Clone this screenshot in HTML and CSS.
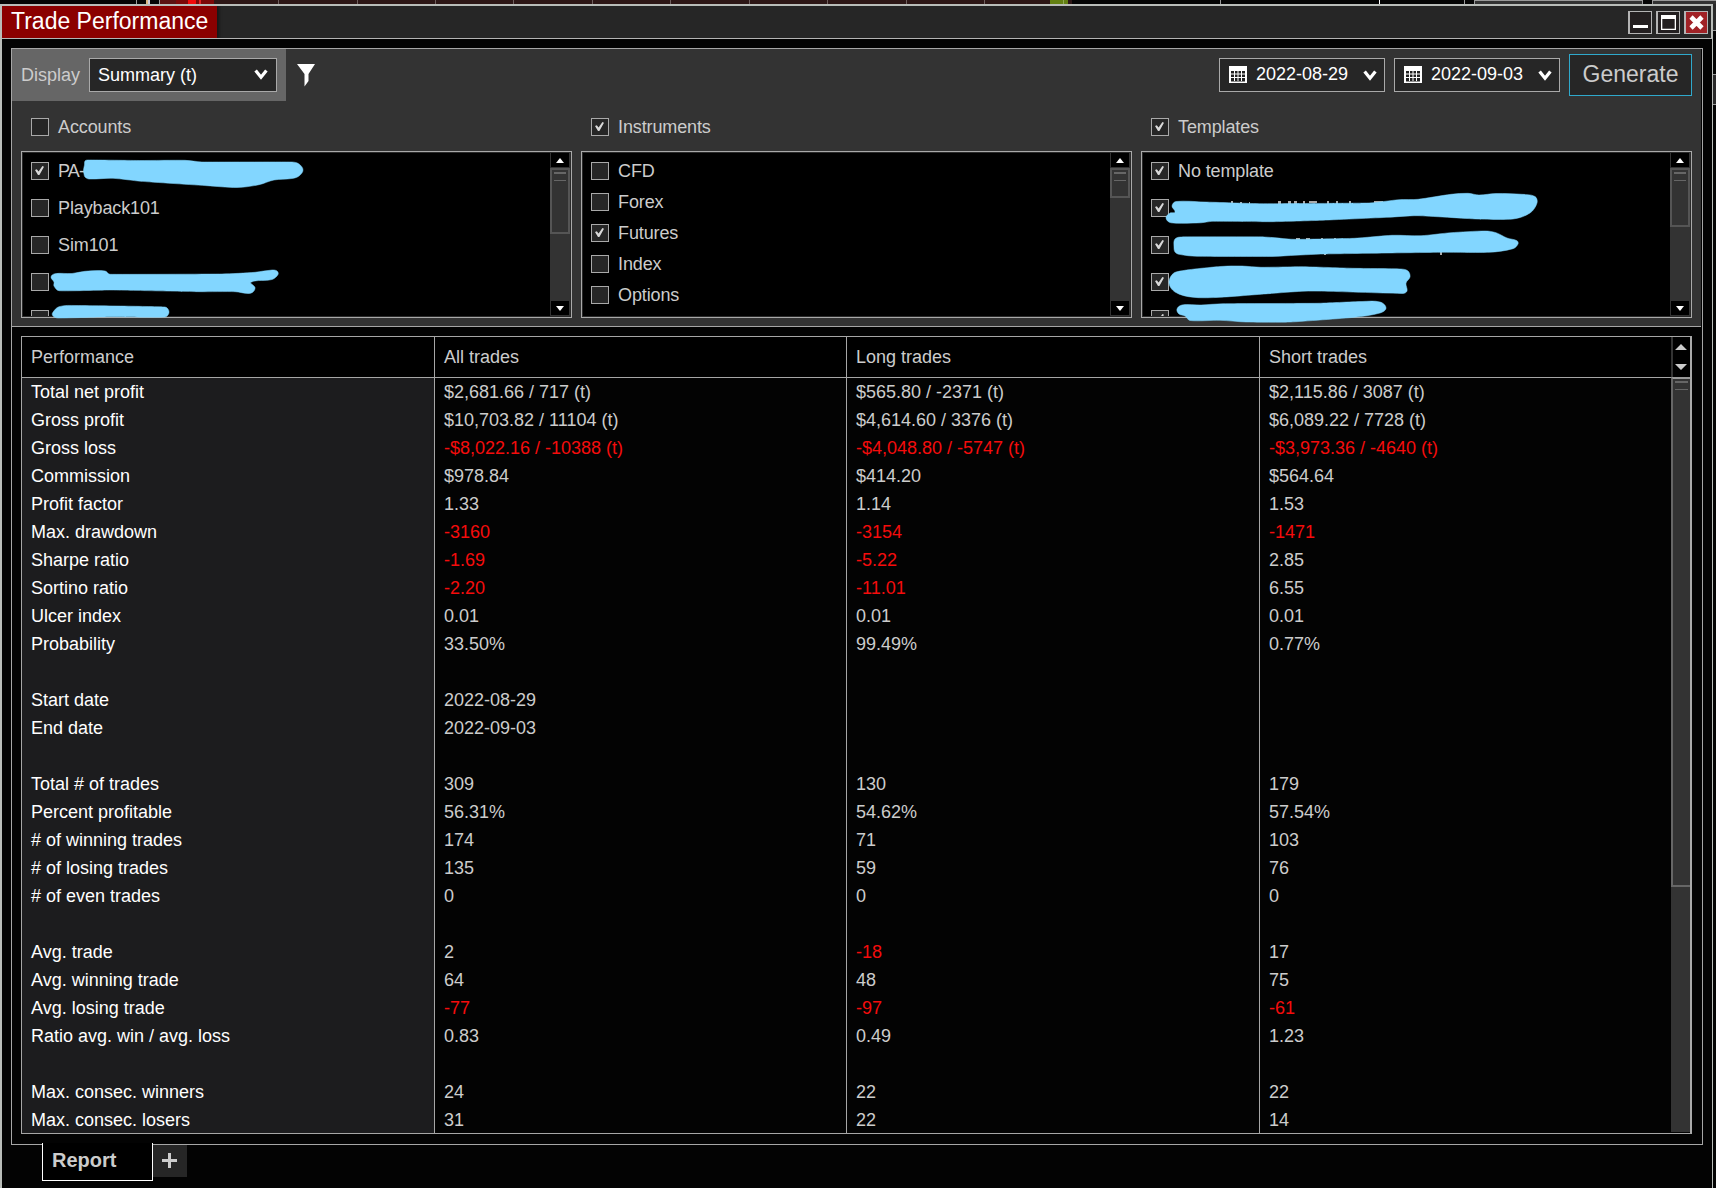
FILE: index.html
```html
<!DOCTYPE html>
<html lang="en">
<head>
<meta charset="utf-8">
<title>Trade Performance</title>
<link rel="stylesheet" href="styles.css">
</head>
<body>
<svg width="0" height="0" class="defs">
  <symbol id="chevron" viewBox="0 0 14 12"><path d="M1.6 2.4 7 9.2 12.4 2.4" fill="none" stroke="#fff" stroke-width="3.2"/></symbol>
  <symbol id="calendar" viewBox="0 0 18 18"><path fill="#fff" d="M0 0h18v17H0z"/><path fill="#222" d="M2 5h14v10.500H2z"/><path d="M5.500 5v10M9 5v10M12.500 5v10M2 8h14M2 11.500h14" stroke="#fff" stroke-width="1"/></symbol>
</svg>
<div class="backdrop">
  <svg width="1716" height="4" shape-rendering="crispEdges">
    <rect width="1716" height="4" fill="#050505"/>
    <path fill="#999" d="M136 0h1v4h-1zM159 0h1v4h-1zM1220 0h1v4h-1zM1464 0h1v4h-1z"/>
    <path fill="#fff" d="M1379 0h1v4h-1z"/>
    <path fill="#d9b582" d="M146 0h2v4h-2z"/><path fill="#ccd" d="M148 0h2v4h-2z"/>
    <rect x="160" width="30" height="4" fill="#5c1212"/><rect x="190" width="860" height="4" fill="#2d1716"/>
    <rect x="176" width="38" height="4" fill="#7b0808"/><rect x="188" width="8" height="4" fill="#f00a0a"/><rect x="199" width="2" height="4" fill="#d22"/>
    <path fill="#6f5f5e" d="M278 0h1v4h-1zM357 0h1v4h-1zM435 0h1v4h-1zM513 0h1v4h-1zM592 0h1v4h-1zM670 0h1v4h-1zM749 0h1v4h-1zM827 0h1v4h-1zM906 0h1v4h-1zM984 0h1v4h-1z"/>
    <rect x="1050" width="18" height="4" fill="#638012"/><rect x="1063" width="1" height="4" fill="#8faa50"/><rect x="1068" width="4" height="4" fill="#2d1716"/>
    <path fill="#999" d="M1474 0h169v4h-169zM1652 0h64v4h-64z"/><path fill="#333" d="M1475 1h167v3h-167zM1653 1h63v3h-63z"/>
  </svg>
</div>
<div class="desk">
<main class="window">
  <header class="titlebar">
    <h1 class="title">Trade Performance</h1>
    <div class="winbtns">
      <span class="winbtn"><svg width="21" height="21"><path fill="#fff" d="M3 13h15v3H3z"/></svg></span>
      <span class="winbtn"><svg width="21" height="21"><path fill="#fff" fill-rule="evenodd" d="M3 3h15v15H3zM4.300 7v9.700h12.400V7z"/></svg></span>
      <span class="winbtn close"><svg width="21" height="21"><path d="M5 5 16 16M16 5 5 16" stroke="#fff" stroke-width="4.600"/></svg></span>
    </div>
  </header>

  <section class="panel">
    <div class="filters">
      <div class="toolbar">
        <div class="display"><span class="display-label">Display</span>
          <div class="combo display-combo"><span>Summary (t)</span><svg width="14" height="12"><use href="#chevron"/></svg></div>
        </div>
        <svg class="funnel" width="18" height="23"><path fill="#fff" d="M0 0h18l-6.500 10v7l-4 5.500V10z"/></svg>
        <div class="actions">
          <div class="combo date"><svg width="18" height="18"><use href="#calendar"/></svg><span>2022-08-29</span><svg class="chev" width="14" height="12"><use href="#chevron"/></svg></div>
          <div class="combo date"><svg width="18" height="18"><use href="#calendar"/></svg><span>2022-09-03</span><svg class="chev" width="14" height="12"><use href="#chevron"/></svg></div>
          <button class="generate">Generate</button>
        </div>
      </div>

      <div class="groups">
        <div class="group">
          <div class="item head"><i class="box"></i>Accounts</div>
          <div class="list wide">
            <div class="items">
              <div class="item tight"><i class="box on"></i>PA-</div>
              <div class="item"><i class="box"></i>Playback101</div>
              <div class="item"><i class="box"></i>Sim101</div>
              <div class="item"><i class="box"></i></div>
              <div class="item"><i class="box"></i></div>
            </div>
            <div class="scroll"><b class="up"></b><span class="thumb t66"></span><b class="down"></b></div>
          </div>
        </div>
        <div class="group">
          <div class="item head"><i class="box on"></i>Instruments</div>
          <div class="list">
            <div class="items">
              <div class="item"><i class="box"></i>CFD</div>
              <div class="item"><i class="box"></i>Forex</div>
              <div class="item"><i class="box on"></i>Futures</div>
              <div class="item"><i class="box"></i>Index</div>
              <div class="item"><i class="box"></i>Options</div>
            </div>
            <div class="scroll"><b class="up"></b><span class="thumb t30"></span><b class="down"></b></div>
          </div>
        </div>
        <div class="group">
          <div class="item head"><i class="box on"></i>Templates</div>
          <div class="list wide">
            <div class="items">
              <div class="item"><i class="box on"></i>No template</div>
              <div class="item"><i class="box on"></i></div>
              <div class="item"><i class="box on"></i></div>
              <div class="item"><i class="box on"></i></div>
              <div class="item"><i class="box on"></i></div>
            </div>
            <div class="scroll"><b class="up"></b><span class="thumb t59"></span><b class="down"></b></div>
          </div>
        </div>
      </div>

      <svg class="redactions" width="1688" height="280" viewBox="12 49 1688 280">
        <path class="hint" d="M1231 201h2v3h-2zM1240 202h2v3h-2zM1249 202h1v3h-1zM1231 201h2v3h-2zM1278 201h3v3h-3zM1288 201h3v3h-3zM1294 201h3v3h-3zM1303 201h2v3h-2zM1309 201h8v2h-8zM1327 201h2v3h-2zM1336 201h2v3h-2zM1349 201h2v3h-2zM1374 201h9v2h-9zM1296 238h4v2h-4zM1306 238h4v2h-4zM1321 238h2v2h-2zM1334 238h2v2h-2zM1360 238h9v2h-9zM1440 251h2v4h-2zM1324 254h2v1h-2z"/>
        <g class="strokes">
          <path data-points="85,161 88,160 141,160.500 185,160.300 202,162 292,162 299,164 303,170 299,176 292,178.500 274,180 259,184.700 237,187.500 207,185.700 141,181.300 113,178.300 89,179 85,177 84,174 83.500,170 84.500,165"/>
          <path data-points="51,277 55,273.700 72,273.500 85,271.300 105,271 110,274.300 222,274 255,272.300 272,270 277,271 278,274.500 272,279.500 251,282.200 255,287.500 253,292 248,293.500 235,291.700 200,291.700 111,290 59,290.700 54,286 54,282"/>
          <path data-points="52.5,313 59,306.700 76,305.500 165,307 169,312 165,317 111,316.700 58,318 53,316"/>
          <path data-points="1172,206 1176,201.500 1205,202 1261,203.700 1369,203 1399,199.700 1418,199.300 1451,194.300 1468,193.300 1479,195 1496,193.500 1522,194.300 1535,196.500 1537,203 1530,213 1513,219 1477,219 1418,215.700 1388,217.300 1321,220.300 1272,221.700 1212,221.300 1201,222.800 1171,222.800 1166,218 1170,213 1175,212"/>
          <path data-points="1174,247 1175,239 1182,237 1264,237 1294,239.300 1354,238.300 1392,235.300 1421,235.700 1451,232.700 1485,231 1496,232.700 1507,238 1517,240.700 1518,244 1513,248.700 1489,252.300 1440,252.300 1324,254 1287,255.700 1272,256.500 1197,256.300 1179,254.300 1175,252"/>
          <path data-points="1169,282 1176,272 1220,266.500 1242,266 1261,267.300 1302,266.700 1354,268.300 1401,269 1408,271 1410,277 1406,283 1407,291 1403,293.500 1328,291.300 1302,291.300 1268,293.700 1220,297.300 1193,297.300 1175,292"/>
          <path data-points="1177,309 1182,305 1201,305 1223,303.700 1317,303.300 1362,301.500 1380,302 1386,308 1380,313 1354,317.300 1291,322 1246,322 1220,320.300 1190,320.500 1185,316 1179,314"/>
        </g>
      </svg>
    </div>

    <div class="report">
      <div class="tablebox">
        <table class="grid">
          <colgroup><col class="c1"><col class="c2"><col class="c3"><col class="c4"></colgroup>
          <thead><tr><th>Performance</th><th>All trades</th><th>Long trades</th><th>Short trades</th></tr></thead>
          <tbody>
            <tr><td>Total net profit</td><td>$2,681.66 / 717 (t)</td><td>$565.80 / -2371 (t)</td><td>$2,115.86 / 3087 (t)</td></tr>
            <tr><td>Gross profit</td><td>$10,703.82 / 11104 (t)</td><td>$4,614.60 / 3376 (t)</td><td>$6,089.22 / 7728 (t)</td></tr>
            <tr><td>Gross loss</td><td class="neg">-$8,022.16 / -10388 (t)</td><td class="neg">-$4,048.80 / -5747 (t)</td><td class="neg">-$3,973.36 / -4640 (t)</td></tr>
            <tr><td>Commission</td><td>$978.84</td><td>$414.20</td><td>$564.64</td></tr>
            <tr><td>Profit factor</td><td>1.33</td><td>1.14</td><td>1.53</td></tr>
            <tr><td>Max. drawdown</td><td class="neg">-3160</td><td class="neg">-3154</td><td class="neg">-1471</td></tr>
            <tr><td>Sharpe ratio</td><td class="neg">-1.69</td><td class="neg">-5.22</td><td>2.85</td></tr>
            <tr><td>Sortino ratio</td><td class="neg">-2.20</td><td class="neg">-11.01</td><td>6.55</td></tr>
            <tr><td>Ulcer index</td><td>0.01</td><td>0.01</td><td>0.01</td></tr>
            <tr><td>Probability</td><td>33.50%</td><td>99.49%</td><td>0.77%</td></tr>
            <tr><td></td><td></td><td></td><td></td></tr>
            <tr><td>Start date</td><td>2022-08-29</td><td></td><td></td></tr>
            <tr><td>End date</td><td>2022-09-03</td><td></td><td></td></tr>
            <tr><td></td><td></td><td></td><td></td></tr>
            <tr><td>Total # of trades</td><td>309</td><td>130</td><td>179</td></tr>
            <tr><td>Percent profitable</td><td>56.31%</td><td>54.62%</td><td>57.54%</td></tr>
            <tr><td># of winning trades</td><td>174</td><td>71</td><td>103</td></tr>
            <tr><td># of losing trades</td><td>135</td><td>59</td><td>76</td></tr>
            <tr><td># of even trades</td><td>0</td><td>0</td><td>0</td></tr>
            <tr><td></td><td></td><td></td><td></td></tr>
            <tr><td>Avg. trade</td><td>2</td><td class="neg">-18</td><td>17</td></tr>
            <tr><td>Avg. winning trade</td><td>64</td><td>48</td><td>75</td></tr>
            <tr><td>Avg. losing trade</td><td class="neg">-77</td><td class="neg">-97</td><td class="neg">-61</td></tr>
            <tr><td>Ratio avg. win / avg. loss</td><td>0.83</td><td>0.49</td><td>1.23</td></tr>
            <tr><td></td><td></td><td></td><td></td></tr>
            <tr><td>Max. consec. winners</td><td>24</td><td>22</td><td>22</td></tr>
            <tr><td>Max. consec. losers</td><td>31</td><td>22</td><td>14</td></tr>
          </tbody>
        </table>
        <div class="tablescroll">
          <svg class="steppers" width="19" height="40"><path fill="#ccc" d="M4 13 10 7l6 6zM4 27l6 6 6-6z"/></svg>
          <span class="thumb long"></span>
        </div>
      </div>
    </div>
  </section>

  <footer class="tabs">
    <div class="tab">Report</div>
    <div class="addtab"><svg width="15" height="15"><path fill="#ccc" d="M6 0h3v6h6v3H9v6H6V9H0V6h6z"/></svg></div>
  </footer>
</main>
<aside class="edge"><i></i><i></i><i></i></aside>
</div>
<script src="strokes.js"></script>
</body>
</html>
```
FILE: strokes.js
```js
// Turns each marker outline's point list into a closed, smoothed curve.
document.querySelectorAll('.strokes path').forEach(function (path) {
  var pts = path.dataset.points.split(' ').map(function (p) { return p.split(',').map(Number); });
  var n = pts.length;
  function tangent(i, len) {
    var a = pts[(i - 1 + n) % n], b = pts[(i + 1) % n];
    var dx = b[0] - a[0], dy = b[1] - a[1], d = Math.hypot(dx, dy) || 1;
    return [dx / d * len, dy / d * len];
  }
  var d = 'M' + pts[0];
  for (var i = 0; i < n; i++) {
    var p = pts[i], q = pts[(i + 1) % n];
    var len = Math.hypot(q[0] - p[0], q[1] - p[1]) / 3;
    // long spans keep short handles so they stay nearly straight
    len = Math.min(len, 8);
    var t = tangent(i, len), u = tangent((i + 1) % n, len);
    d += 'C' + [p[0] + t[0], p[1] + t[1], q[0] - u[0], q[1] - u[1], q[0], q[1]].join(' ');
  }
  path.setAttribute('d', d + 'Z');
});
```
FILE: styles.css
```css
* { box-sizing: border-box; }
body {
  margin: 0;
  width: 1716px;
  height: 1188px;
  overflow: hidden;
  background: #030303;
  color: #ccc;
  font: 18px/20px "Liberation Sans", Arial, sans-serif;
}
svg { display: block; }
.defs { position: absolute; }
.backdrop { height: 4px; }
.desk { display: flex; }

.window {
  width: 1713px;
  height: 1184px;
  border: solid #b9bdb9;
  border-width: 2px 1px 0 2px;
  background: #030303;
}
.edge { width: 3px; height: 1184px; background: #040404; }
.edge i { display: block; border-bottom: 1px solid #999; }
.edge i:nth-child(1) { height: 27px; background: #2a2a2a; }
.edge i:nth-child(2) { height: 44px; }
.edge i:nth-child(3) { height: 30px; background: #2a2a2a; }

.titlebar {
  display: flex;
  justify-content: space-between;
  height: 33px;
  background: #262626;
  border-bottom: 1px solid #b4b4b4;
  border-right: 1px solid #b9bdb9;
}
.title {
  margin: 0;
  width: 215px;
  height: 32px;
  padding-left: 9px;
  background: #8b0000;
  box-shadow: 1px 0 3px 1px #161616;
  clip-path: inset(0 -6px 0 0);
  color: #fff;
  font-size: 23px;
  font-weight: 400;
  line-height: 31px;
  white-space: nowrap;
}
.winbtns { display: flex; gap: 4px; padding: 5px 3px 0 0; }
.winbtn { width: 24px; height: 23px; border: 1px solid #b4b4b4; border-left-width: 2px; background: #231f20; }
.winbtn.close { background: #a02226; }

.panel {
  width: 1692px;
  height: 1097px;
  margin: 9px 0 0 9px;
  border: 1px solid #a6a6a6;
}
.filters {
  position: relative;
  width: 1689px;
  height: 278px;
  background: #333;
  border-bottom: 1px solid #a6a6a6;
}
.toolbar { display: flex; height: 52px; }
.display { display: flex; width: 274px; height: 52px; padding: 9px; background: #666; justify-content: space-between; }
.display-label { line-height: 35px; }
.combo {
  display: flex;
  height: 34px;
  align-items: center;
  background: #262626;
  border: 1px solid #a9a9a9;
  color: #fff;
}
.display-combo { width: 188px; padding: 0 8px; justify-content: space-between; }
.display-combo span { margin-top: -1px; }
.display-combo svg { margin-top: -2px; }
.funnel { margin: 15px 0 0 11px; }
.actions { display: flex; align-items: flex-start; gap: 9px; margin: 5px 9px 0 auto; }
.date { width: 166px; margin-top: 4px; padding: 0 7px 0 9px; }
.date span { margin: -3px 0 0 9px; }
.date .chev { margin-left: auto; }
.generate {
  width: 123px;
  height: 42px;
  padding: 0 0 3px;
  background: #262626;
  border: 1px solid #2fa9cc;
  color: #ccc;
  font: 23px/26px "Liberation Sans", Arial, sans-serif;
}

.groups { display: grid; grid-template-columns: repeat(3, 551px); gap: 9px; padding: 17px 0 0 9px; }
.item { display: flex; gap: 9px; height: 18px; line-height: 18px; align-items: center; white-space: nowrap; letter-spacing: -0.12px; }
.tight { letter-spacing: -0.8px; }
.head { margin: 0 0 15px 10px; }
.box { width: 18px; height: 18px; flex: none; background: #262626; border: 1px solid #a9a9a9; }
.box.on::after {
  content: "";
  display: block;
  width: 9px;
  height: 9px;
  margin: 3px 0 0 3px;
  background: #d8d8d8;
  clip-path: polygon(0 4px, 1.8px 3.3px, 3.6px 5.6px, 7.4px 0, 9px 0.8px, 4.4px 9px, 3px 9px);
}
.list { display: flex; height: 167px; background: #000; border: 1px solid #a9a9a9; padding: 1px 1px 1px 0; box-shadow: inset 0 0 0 1px #2a2a2a; }
.items { flex: 1; padding: 9px 0 0 9px; overflow: hidden; display: flex; flex-direction: column; gap: 13px; }
.items .item { flex: none; }
.wide .items { gap: 19px; }
.scroll { width: 20px; display: flex; flex-direction: column; background: #333; padding: 0 1px; align-items: center; }
.up, .down { width: 18px; height: 14px; flex: none; background: #000; display: grid; place-items: center; }
.up::before, .down::before { content: ""; border: solid transparent; border-width: 0 4.5px 5px; border-bottom-color: #fff; }
.down::before { border-width: 5px 4.5px 0; border-top-color: #fff; }
.down { margin: auto 0 1px; }
.thumb { display: block; width: 20px; margin-top: 1px; border: 2px solid #555; background: #333; padding: 2px 2px 0; }
.thumb::before { content: ""; display: block; height: 6px; border-top: 2px solid #666; border-bottom: 1px solid #666; }
.t66 { height: 66px; }
.t30 { height: 30px; }
.t59 { height: 59px; }
.redactions { position: absolute; left: 0; top: 0; }
.strokes { fill: #82d6ff; stroke: #82d6ff; stroke-linejoin: round; stroke-width: 0.5; }
.hint { fill: #aaa; }

.report { padding: 9px 0 0 9px; }
.tablebox { display: flex; width: 1671px; height: 798px; border: 1px solid #a6a6a6; border-right: 2px solid #aaa; padding-bottom: 1px; overflow: hidden; }
.grid { width: 1649px; table-layout: fixed; border-collapse: separate; border-spacing: 0; flex: none; height: 797px; }
.c1, .c3 { width: 413px; }
.c2 { width: 412px; }
.c4 { width: 411px; }
.grid th, .grid td { padding: 0 0 0 9px; text-align: left; font-weight: 400; border-right: 1px solid #a6a6a6; white-space: nowrap; }
.grid th { height: 41px; background: #000; border-bottom: 1px solid #a6a6a6; }
.grid td { height: 28px; }
.grid th:last-child, .grid td:last-child { border-right: 0; }
.grid td:first-child { background: #1c1c1e; color: #fff; }
.grid .neg { color: #f50c0c; }
.tablescroll { width: 19px; height: 795px; background: #333; flex: none; }
.steppers { background: #000; box-shadow: inset 2px 0 #333; }
.long { width: 19px; height: 510px; margin: 0; border-width: 2px 0 2px 2px; border-color: #666; border-top-color: #999; }

.tabs { display: flex; margin: -2px 0 0 40px; position: relative; }
.tab { width: 111px; height: 38px; border: 1px solid #fff; border-top: 0; background: #000; padding-left: 9px; font-size: 20px; font-weight: 700; line-height: 34px; }
.addtab { width: 34px; height: 32px; margin-top: 2px; background: #262626; padding: 8px 0 0 9px; }
```
